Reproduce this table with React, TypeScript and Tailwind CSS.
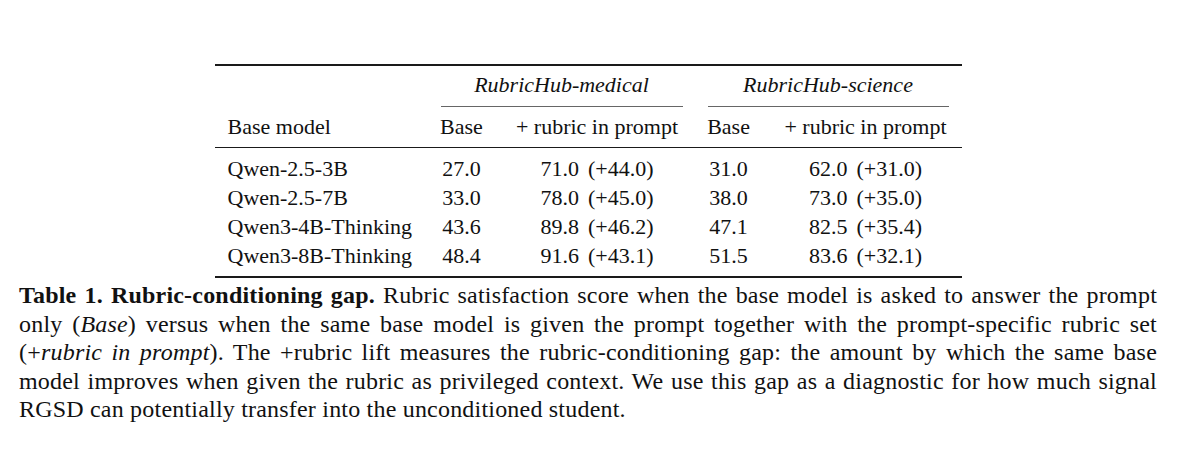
const rows = [
  { name: 'Qwen-2.5-3B', medBase: '27.0', med: '71.0', medGain: '+44.0', sciBase: '31.0', sci: '62.0', sciGain: '+31.0' },
  { name: 'Qwen-2.5-7B', medBase: '33.0', med: '78.0', medGain: '+45.0', sciBase: '38.0', sci: '73.0', sciGain: '+35.0' },
  { name: 'Qwen3-4B-Thinking', medBase: '43.6', med: '89.8', medGain: '+46.2', sciBase: '47.1', sci: '82.5', sciGain: '+35.4' },
  { name: 'Qwen3-8B-Thinking', medBase: '48.4', med: '91.6', medGain: '+43.1', sciBase: '51.5', sci: '83.6', sciGain: '+32.1' },
];

const cols = 'grid grid-cols-[222px_50px_221px_42px_212px]';

const Score = ({ value, gain }: { value: string; gain: string }) => (
  <span className="whitespace-nowrap">
    {value}
    <span className="ml-[9px]">({gain})</span>
  </span>
);

const App = () => {
  return (
    <div className="min-h-screen bg-white text-[#111] font-['Liberation_Serif',serif] text-[22px]">
      <div className="w-[1138px] ml-[19px] pt-[64px]">
        {/* Table */}
        <div className="w-[747px] mx-auto border-t-2 border-b-2 border-[#1a1a1a]">
          {/* group headers */}
          <div className={cols}>
            <div />
            <div className="col-span-2 ml-[4px] mr-[25px] pb-[2px] border-b border-[#666]">
              <div className="leading-[38px] text-center italic">RubricHub-medical</div>
            </div>
            <div className="col-span-2 mr-[13px] pb-[2px] border-b border-[#666]">
              <div className="leading-[38px] text-center italic">RubricHub-science</div>
            </div>
          </div>

          {/* column headers */}
          <div className={`${cols} leading-[40px] border-b-[1.5px] border-[#1a1a1a]`}>
            <div className="pl-[13px]">Base model</div>
            <div className="flex justify-center whitespace-nowrap">Base</div>
            <div className="flex justify-center whitespace-nowrap">+ rubric in prompt</div>
            <div className="flex justify-center whitespace-nowrap">Base</div>
            <div className="flex justify-center whitespace-nowrap pl-[20px]">+ rubric in prompt</div>
          </div>

          {/* body */}
          <div className="pt-[6px] pb-[6px]">
            {rows.map((r) => (
              <div key={r.name} className={`${cols} leading-[29px]`}>
                <div className="pl-[13px] whitespace-nowrap">{r.name}</div>
                <div className="flex justify-center">{r.medBase}</div>
                <div className="flex justify-center">
                  <Score value={r.med} gain={r.medGain} />
                </div>
                <div className="flex justify-center">{r.sciBase}</div>
                <div className="flex justify-center pl-[20px]">
                  <Score value={r.sci} gain={r.sciGain} />
                </div>
              </div>
            ))}
          </div>
        </div>

        {/* Caption */}
        <div className="mt-[3px] text-[24px] tracking-[0.2px] leading-[28.5px]">
          <div className="text-justify [text-align-last:justify] whitespace-nowrap">
            <b>Table 1. Rubric-conditioning gap.</b> Rubric satisfaction score when the base model is asked to answer the prompt
          </div>
          <div className="text-justify [text-align-last:justify] whitespace-nowrap">
            only (<i>Base</i>) versus when the same base model is given the prompt together with the prompt-specific rubric set
          </div>
          <div className="text-justify [text-align-last:justify] whitespace-nowrap">
            (+<i>rubric in prompt</i>). The +rubric lift measures the rubric-conditioning gap: the amount by which the same base
          </div>
          <div className="text-justify [text-align-last:justify] whitespace-nowrap">
            model improves when given the rubric as privileged context. We use this gap as a diagnostic for how much signal
          </div>
          <div>RGSD can potentially transfer into the unconditioned student.</div>
        </div>
      </div>
    </div>
  );
};

export default App;
